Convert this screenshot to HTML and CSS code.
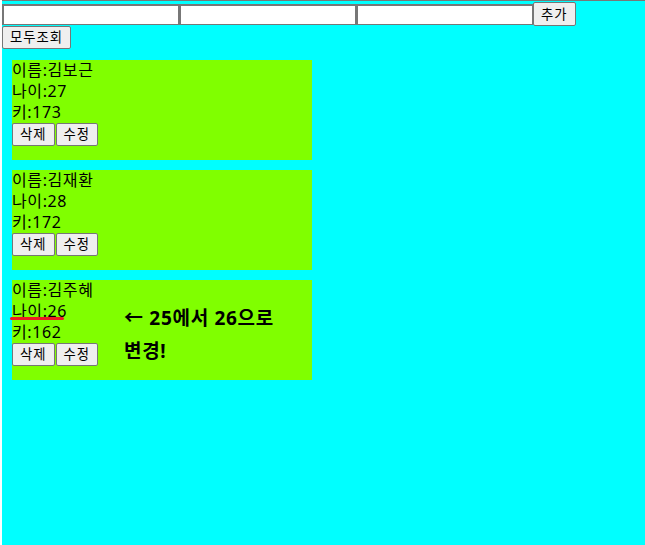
FILE: index.html
```html
<!DOCTYPE html>
<html>
	<head>
		<meta charset="utf-8">
		<title>회원 목록</title>
		<link rel="stylesheet" href="styles.css">
	</head>
	<body>
		<div class="form">
			<input type="text" class="field"><input type="text" class="field"><input type="text" class="field"><button class="btn">추가</button>
		</div>
		<div class="actions">
			<button class="btn">모두조회</button>
		</div>
		<div class="list">
			<div class="card">
				<div class="line">이름:김보근</div>
				<div class="line">나이:27</div>
				<div class="line">키:173</div>
				<div class="actions">
					<button class="btn">삭제</button><button class="btn">수정</button>
				</div>
			</div>
			<div class="card">
				<div class="line">이름:김재환</div>
				<div class="line">나이:28</div>
				<div class="line">키:172</div>
				<div class="actions">
					<button class="btn">삭제</button><button class="btn">수정</button>
				</div>
			</div>
			<div class="card">
				<div class="line">이름:김주혜</div>
				<div class="line">나이:26</div>
				<div class="line">키:162</div>
				<div class="actions">
					<button class="btn">삭제</button><button class="btn">수정</button>
				</div>
				<span class="mark"></span>
				<div class="note">← 25에서 26으로 변경!</div>
			</div>
		</div>
	</body>
</html>
```

FILE: styles.css
```css
* {
	box-sizing: border-box;
	font-family: 'Noto Sans', 'Noto Sans CJK KR', sans-serif;
}

html {
	background-color: #fff;
	height: 100%;
}

body {
	margin: 0 0 0 2px;
	min-height: 100%;
	border-top: 1px solid #777;
	background-color: #0ff;
	color: #000;
}

.form {
	display: flex;
	align-items: flex-end;
	height: 25px;
}

.field {
	width: 177px;
	height: 21px;
	margin: 0 0 1px 0;
	border: 2px solid #777;
	border-width: 2px 1px 1px 2px;
	background-color: #fff;
	padding: 1px 2px;
}

.actions {
	display: flex;
	gap: 1px;
}

.btn {
	height: 23px;
	margin: 0;
	padding: 0 7px;
	font-size: 13.33px;
	line-height: 19px;
	letter-spacing: 1px;
	color: #000;
	background-color: #efefef;
	border: 1px solid #767676;
	border-radius: 2px;
}

.form .btn {
	height: 24px;
}

.list {
	padding-top: 1px;
}

.card {
	position: relative;
	width: 300px;
	height: 100px;
	margin: 10px;
	background-color: #80ff00;
}

.line {
	font-size: 16px;
	line-height: 21px;
	height: 21px;
	letter-spacing: 0.6px;
}

.mark {
	position: absolute;
	left: -2px;
	top: 37px;
	width: 54px;
	height: 3px;
	border-radius: 2px;
	background-color: #ed1c24;
}

.note {
	position: absolute;
	left: 112px;
	top: 22px;
	width: 170px;
	font-size: 19px;
	font-weight: bold;
	line-height: 33px;
	letter-spacing: 0.7px;
	word-break: keep-all;
}
```
